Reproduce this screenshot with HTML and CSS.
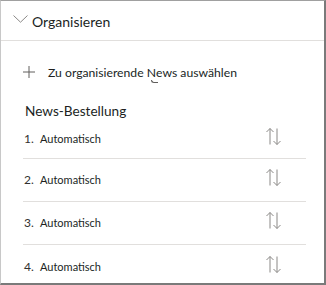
FILE: index.html
```html
<!DOCTYPE html>
<html lang="de">
<head>
<meta charset="utf-8">
<link rel="stylesheet" href="styles.css">
</head>
<body>
<div class="panel">
  <div class="header">
    <svg class="chevron" width="15" height="8" viewBox="0 0 15 8"><path d="M0.5 0.5 L7.5 7.2 L14.5 0.5" fill="none" stroke="#8a8886" stroke-width="1"/></svg>
    <span class="title">Organisieren</span>
  </div>
  <div class="body">
    <div class="add">
      <svg class="plus" width="12" height="12" viewBox="0 0 12 12"><path d="M6 0 V12 M0 6 H12" stroke="#605e5c" stroke-width="1"/></svg>
      <span class="add-label">Zu organisierende <span class="key">N</span>ews auswählen</span>
    </div>
    <div class="section-label">News-Bestellung</div>
    <ul class="list">
      <li class="row"><span class="num">1.</span><span class="name">Automatisch</span><svg class="sort" width="18" height="17" viewBox="0 0 18 17"><path d="M5 0.5 V16.5 M1.5 4 L5 0.5 L8.5 4 M12 0.5 V16.5 M8.5 13 L12 16.5 L15.5 13" fill="none" stroke="#8a8886" stroke-width="1"/></svg></li>
      <li class="row"><span class="num">2.</span><span class="name">Automatisch</span><svg class="sort" width="18" height="17" viewBox="0 0 18 17"><path d="M5 0.5 V16.5 M1.5 4 L5 0.5 L8.5 4 M12 0.5 V16.5 M8.5 13 L12 16.5 L15.5 13" fill="none" stroke="#8a8886" stroke-width="1"/></svg></li>
      <li class="row"><span class="num">3.</span><span class="name">Automatisch</span><svg class="sort" width="18" height="17" viewBox="0 0 18 17"><path d="M5 0.5 V16.5 M1.5 4 L5 0.5 L8.5 4 M12 0.5 V16.5 M8.5 13 L12 16.5 L15.5 13" fill="none" stroke="#8a8886" stroke-width="1"/></svg></li>
      <li class="row"><span class="num">4.</span><span class="name">Automatisch</span><svg class="sort" width="18" height="17" viewBox="0 0 18 17"><path d="M5 0.5 V16.5 M1.5 4 L5 0.5 L8.5 4 M12 0.5 V16.5 M8.5 13 L12 16.5 L15.5 13" fill="none" stroke="#8a8886" stroke-width="1"/></svg></li>
    </ul>
  </div>
</div>
</body>
</html>
```
FILE: styles.css
```css
* { box-sizing: border-box; }
html, body { margin: 0; padding: 0; background: #ffffff; }
body {
  font-family: "Segoe UI", Lato, "Open Sans", "Liberation Sans", sans-serif;
  color: #323130;
}
.panel {
  width: 326px;
  height: 285px;
  border-top: 1px solid #a0a0a0;
  border-left: 1px solid #c8c8c8;
  border-right: 2px solid #7a7a7a;
  border-bottom: 2px solid #7a7a7a;
  background: #fff;
  overflow: hidden;
}
.header {
  height: 40px;
  border-bottom: 1px solid #e1dfdd;
  display: flex;
  align-items: center;
  padding-left: 12px;
}
.chevron { display: block; margin-top: -4px; }
.title {
  margin-left: 4px;
  font-size: 14px;
  color: #201f1e;
  margin-top: 1px;
}
.body { padding: 0 18px 0 22px; }
.add {
  display: flex;
  align-items: center;
  height: 32px;
  margin-top: 15px;
}
.plus { display: block; margin-left: 0; }
.add-label {
  margin-left: 13px;
  font-size: 12.2px;
  color: #201f1e;
  position: relative;
}
.key { position: relative; }
.key::after {
  content: "";
  position: absolute;
  left: 4px;
  bottom: -3px;
  width: 6px;
  height: 2px;
  border-bottom: 1px solid #605e5c;
  border-left: 1px solid #605e5c;
  border-radius: 0 0 0 3px;
}
.section-label {
  margin-top: 15px;
  font-size: 13.6px;
  color: #201f1e;
  padding-left: 2px;
}
.list { list-style: none; margin: 0; padding: 0; }
.row {
  display: flex;
  align-items: center;
  height: 43.33px;
  border-bottom: 1px solid #e1dfdd;
  padding-left: 1px;
}
.row:first-child { height: 39.5px; }
.row:last-child { border-bottom: none; }
.num { font-size: 12px; width: 16px; color: #323130; }
.name { font-size: 11px; color: #201f1e; flex: 1; }
.sort { display: block; margin-right: 23px; margin-top: -4px; }
```
